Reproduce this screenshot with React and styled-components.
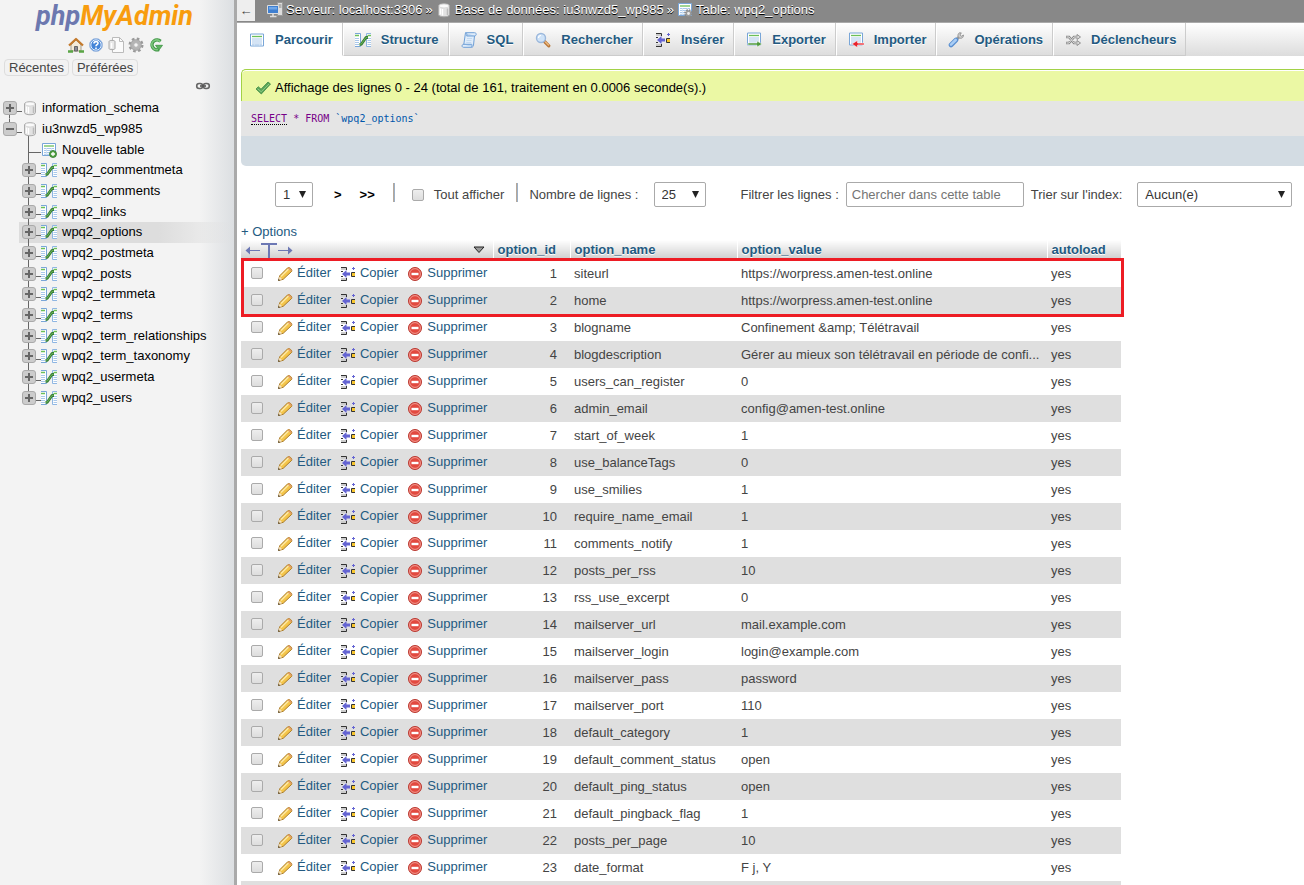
import React, { useState } from "react";
import styled, { createGlobalStyle } from "styled-components";

const GlobalStyle = createGlobalStyle`
  * {
    box-sizing: border-box;
  }
  body {
    margin: 0;
    background: #fff;
    color: #444;
    font-family: "Liberation Sans", Arial, sans-serif;
    font-size: 13px;
    line-height: 16px;
  }
  button, input, select {
    font: inherit;
    color: inherit;
  }
  a {
    color: #235a81;
    text-decoration: none;
  }
`;

const Page = styled.div`
  display: flex;
  height: 100vh;
  overflow: hidden;
`;

/* ---------- sidebar ---------- */

const Sidebar = styled.nav`
  flex: none;
  width: 237px;
  border-right: 3px solid #aaa;
  background: linear-gradient(to right, #f3f3f3 200px, #dcdfe2);
`;

const Logo = styled.a`
  display: block;
  padding-right: 5px;
  text-align: center;
  font-family: Roboto, sans-serif;
  font-size: 27px;
  font-weight: 700;
  font-style: italic;
  line-height: 32px;
  color: #f89c0e;
  span {
    color: #6c78af;
  }
`;

const QuickLinks = styled.div`
  display: flex;
  justify-content: center;
  gap: 4px;
  padding: 5px 2px 6px 0;
  a {
    height: 16px;
  }
`;

const RecentRow = styled.div`
  display: flex;
  gap: 3px;
  padding-left: 4px;
`;

const RecentButton = styled.button`
  height: 17px;
  padding: 0 4px;
  border: 1px solid #ddd;
  border-radius: 4px;
  background: #f2f2f2;
  line-height: 15px;
  cursor: pointer;
`;

const LinkToggle = styled.button`
  display: block;
  margin: 2px 23px 4px auto;
  padding: 0;
  border: 0;
  background: none;
  height: 16px;
  cursor: pointer;
`;

const Tree = styled.ul`
  display: grid;
  grid-auto-rows: 1fr;
  height: 310px;
  margin: 0;
  padding: 0;
  list-style: none;
`;

const TreeRow = styled.li`
  display: flex;
  align-items: center;
  margin-left: ${(p) => (p.$nested ? 19 : 0)}px;
  padding-left: 3px;
  background: ${(p) => (p.$current ? "linear-gradient(to right, #ddd 140px, #dcdcdc00)" : "none")};
  a {
    color: #000;
    margin-left: ${(p) => (p.$nested ? 5 : 4)}px;
  }
`;

// vertical rail + horizontal branch of the tree, painted behind the expander
const rails = {
  down: "6px 100% / 1px 50%",
  up: "6px 0 / 1px 50%",
  full: "6px 0 / 1px 100%",
};

const Rail = styled.span`
  display: flex;
  align-items: center;
  align-self: stretch;
  width: 19px;
  background:
    linear-gradient(#666, #666) ${(p) => rails[p.$rail]} no-repeat,
    linear-gradient(#666, #666) 6px 13px / 13px 1px no-repeat;
`;

const TreeIcon = styled.span`
  display: flex;
  align-items: center;
  align-self: stretch;
  background: ${(p) =>
    p.$open ? "linear-gradient(#666, #666) 6px 100% / 1px 4px no-repeat" : "none"};
`;

const Expander = styled.button`
  width: 14px;
  height: 14px;
  padding: 0;
  border: 1px solid #aaa;
  border-radius: 3px;
  background: #ccc;
  cursor: pointer;
  svg {
    display: block;
  }
`;

/* ---------- top of the main column ---------- */

const Main = styled.main`
  flex: 1;
  min-width: 0;
`;

const ServerBar = styled.header`
  display: flex;
  align-items: flex-start;
  height: 23px;
  background: #888;
  border-bottom: 1px solid #aaa;
`;

const Collapse = styled.button`
  width: 18px;
  height: 21px;
  padding: 0;
  border: 0;
  background: #eee;
  color: #444;
  line-height: 21px;
  cursor: pointer;
`;

const Crumbs = styled.div`
  display: flex;
  align-items: center;
  gap: 3px;
  height: 20px;
  margin-left: 12px;
  color: #fff;
  text-shadow: 0 1px 0 #000;
  white-space: nowrap;
  a {
    display: flex;
    align-items: center;
    gap: 3px;
    color: #fff;
  }
`;

const Tabs = styled.nav`
  display: flex;
  height: 33px;
  background: linear-gradient(#fff, #dcdcdc);
`;

const Tab = styled.a`
  display: flex;
  align-items: center;
  gap: 10px;
  padding: 2px 9px 0 11px;
  border: solid;
  border-width: 0 1px 1px;
  border-color: #fff #ccc ${(p) => (p.$active ? "#fff" : "#ccc")} #fff;
  background: ${(p) => (p.$active ? "#fff" : "none")};
  font-weight: bold;
  text-shadow: 0 1px 0 #fff;
  white-space: nowrap;
`;

/* ---------- query result ---------- */

const Content = styled.div`
  padding: 13px 0 0 4px;
`;

const Success = styled.div`
  display: flex;
  align-items: center;
  gap: 4px;
  height: 32px;
  padding: 4px 0 0 13px;
  border: solid #a2d246;
  border-width: 1px 0 0 1px;
  border-radius: 5px 0 0 0;
  background: #ebf8a4;
  box-shadow: inset 0 1px 0 #fff;
  color: #000;
`;

const Query = styled.code`
  display: block;
  height: 35px;
  padding: 11px 0 0 10px;
  background: #e5e5e5;
  font-family: "DejaVu Sans Mono", monospace;
  font-size: 10px;
  line-height: 14px;
  color: #708;
  a {
    color: #708;
    border-bottom: 1px dotted #000;
  }
  span {
    color: #05a;
  }
`;

const Tools = styled.div`
  height: 30px;
  border-radius: 0 0 0 5px;
  background: #d3dce3;
`;

const Pager = styled.form`
  display: flex;
  align-items: center;
  height: 25px;
  margin: 16px 0 17px;
  padding-left: 34px;
  white-space: nowrap;
`;

const PageButtons = styled.div`
  display: flex;
  gap: 18px;
  margin: 0 18px 0 21px;
`;

const PageButton = styled.button`
  padding: 0;
  border: 0;
  background: none;
  color: #000;
  font-weight: bold;
  cursor: pointer;
`;

const Divider = styled.span`
  flex: none;
  align-self: flex-start;
  width: 2px;
  height: 19px;
  margin-top: 1px;
  border-left: 1px solid #b8a898;
  background: #9bb0c8;
`;

const Field = styled.label`
  display: flex;
  align-items: center;
  gap: ${(p) => p.$gap}px;
  margin-left: ${(p) => p.$before}px;
`;

const arrow =
  "data:image/svg+xml,%3Csvg xmlns='http://www.w3.org/2000/svg' width='7' height='7'%3E%3Cpath d='M0 0h7L3.5 7z' fill='%23222'/%3E%3C/svg%3E";

const Select = styled.select`
  appearance: none;
  width: ${(p) => p.$width}px;
  height: 25px;
  padding: 0 7px;
  border: 1px solid #aaa;
  border-radius: 2px;
  background: #fff url("${arrow}") right 6px top 8px no-repeat;
  color: #333;
`;

const FilterInput = styled.input`
  width: 178px;
  height: 25px;
  padding: 0 5px;
  border: 1px solid #aaa;
  border-radius: 2px;
  &::placeholder {
    color: #757575;
  }
`;

const Checkbox = styled.input.attrs({ type: "checkbox" })`
  appearance: none;
  flex: none;
  width: 12px;
  height: 12px;
  margin: 0;
  border: 1px solid #aaa;
  border-radius: 2px;
  background: linear-gradient(#eee, #ddd);
  &:checked {
    background: #777;
  }
`;

const OptionsLink = styled.a`
  display: block;
`;

/* ---------- data table ---------- */

const TableWrap = styled.div`
  position: relative;
  width: 880px;
`;

const Table = styled.table`
  width: 100%;
  table-layout: fixed;
  border-collapse: collapse;
`;

const Th = styled.th`
  width: ${(p) => p.$width}px;
  height: 20px;
  padding: 0 4px;
  border-left: ${(p) => (p.$first ? 0 : 1)}px solid #fff;
  background: linear-gradient(#fff, #ccc);
  text-align: left;
  text-shadow: 0 1px 0 #fff;
  color: #235a81;
`;

const HeadTools = styled.div`
  display: flex;
  justify-content: space-between;
  align-items: center;
  padding-right: 4px;
`;

const Tr = styled.tr`
  height: 27px;
  background: ${(p) => (p.$odd ? "#fff" : "#dfdfdf")};
`;

const Td = styled.td`
  padding: ${(p) => (p.$right ? "1px 13px 0 0" : "1px 4px 0")};
  text-align: ${(p) => (p.$right ? "right" : "left")};
  white-space: nowrap;
`;

const ActionCell = styled.td`
  padding: 0 0 2px 10px;
`;

const Actions = styled.div`
  display: flex;
  align-items: center;
  gap: 9px;
`;

const Action = styled.a`
  display: flex;
  align-items: center;
  gap: 4px;
  svg {
    margin-top: 2px;
  }
`;

const RowCheck = styled(Checkbox)`
  margin-right: 5px;
`;

// frame drawn over the two rows that hold the site address
const Highlight = styled.div`
  position: absolute;
  top: 18px;
  left: 0;
  right: -3px;
  height: 59px;
  border: 3px solid #ed1c24;
  pointer-events: none;
`;

/* ---------- icons ---------- */

const Svg = ({ children }) => (
  <svg width="16" height="16" viewBox="0 0 16 16" fill="none" aria-hidden="true" style={{ flex: "none" }}>
    {children}
  </svg>
);

const HomeIcon = () => (
  <Svg>
    <path d="M3 8l5-5 5 5v6H3z" fill="#f3ead8" stroke="#a9a08c" />
    <path d="M1 8.500L8 2l7 6.500" stroke="#c47a2c" strokeWidth="2.200" strokeLinejoin="round" />
    <path d="M6.500 14V9.500h3V14z" fill="#8a8a96" stroke="#666" />
    <path d="M0 14.500h5M11 14.500h5" stroke="#5aa545" strokeWidth="2.500" />
  </Svg>
);

const HelpIcon = () => (
  <Svg>
    <circle cx="8" cy="8" r="6.500" fill="#4384d8" stroke="#a8bfe0" />
    <circle cx="8" cy="8" r="5.200" stroke="#e8f1fc" />
    <path d="M6 6.500c0-2.500 4-2.500 4-.3 0 1.500-2 1.500-2 3M8 10.500V12" stroke="#fff" strokeWidth="1.600" />
  </Svg>
);

const DocIcon = () => (
  <Svg>
    <path d="M4.500.5h7l4 4v11h-11z" fill="#fbfbfb" stroke="#bbb" />
    <path d="M11.500.5v4h4" stroke="#bbb" />
    <path d="M1 4.500c0-1.500 6-1.500 6 0v7c0 1.500-6 1.500-6 0z" fill="#e8e8e8" stroke="#aaa" />
    <path d="M3.500 6v5" stroke="#fff" strokeWidth="1.500" />
  </Svg>
);

const GearIcon = () => (
  <Svg>
    <circle cx="8" cy="8" r="6.300" stroke="#999" strokeWidth="2.400" strokeDasharray="2.600 2.350" />
    <circle cx="8" cy="8" r="4" stroke="#b4b4b4" strokeWidth="3" />
    <circle cx="8" cy="8" r="5.400" stroke="#999" strokeWidth=".6" />
    <circle cx="8" cy="8" r="2.300" fill="#f3f3f3" stroke="#999" strokeWidth=".7" />
  </Svg>
);

const ReloadIcon = () => (
  <Svg>
    <path d="M12.500 4.300A5 5 0 1 0 11 12.500" stroke="#3d9443" strokeWidth="3.400" />
    <path d="M12.300 4.700A4.800 4.800 0 1 0 10.500 12.300" stroke="#7cc67c" strokeWidth="1.600" />
    <path d="M7.500 8.300h7L11 13z" fill="#5db360" stroke="#3d9443" strokeWidth=".8" />
  </Svg>
);

const ChainIcon = () => (
  <Svg>
    <rect x="1.700" y="5.500" width="6" height="5" rx="2.500" stroke="#666" strokeWidth="1.600" />
    <rect x="8.300" y="5.500" width="6" height="5" rx="2.500" stroke="#666" strokeWidth="1.600" />
    <path d="M5 8h6" stroke="#555" strokeWidth="1.600" />
  </Svg>
);

const DbIcon = () => (
  <Svg>
    <path d="M2.500 4c0-3 11-3 11 0v8.500c0 3-11 3-11 0z" fill="#e2e2e2" stroke="#aaa" />
    <path d="M4.500 6.500v6M6.500 7v6.500" stroke="#fff" strokeWidth="1.300" />
    <path d="M11.500 6.500V13" stroke="#bbb" strokeWidth="1.500" />
    <ellipse cx="8" cy="4" rx="4.800" ry="1.900" fill="#fafafa" stroke="#ccc" strokeWidth=".6" />
  </Svg>
);

const Sheet = ({ y = 0 }) => (
  <>
    <path d={`M1.500 ${1.5 + y}h13v12h-13z`} fill="#fff" stroke="#79a6d8" />
    <path d={`M3 ${4 + y}h10`} stroke="#6bbf59" strokeWidth="1.300" />
    <path d={`M3 ${6.5 + y}h10M3 ${8.5 + y}h10M3 ${10.5 + y}h10M3 ${12.3 + y}h10`} stroke="#a9c8ea" />
    <path d={`M5.500 ${6 + y}v7M10.500 ${6 + y}v7`} stroke="#d4e4f5" strokeWidth=".8" />
  </>
);

const BrowseIcon = () => (
  <Svg>
    <Sheet y={0.5} />
  </Svg>
);

const NewTableIcon = () => (
  <Svg>
    <Sheet />
    <circle cx="12" cy="12" r="3.500" fill="#55a245" stroke="#2f7a2b" strokeWidth=".8" />
    <path d="M12 10v4M10 12h4" stroke="#fff" strokeWidth="1.300" />
  </Svg>
);

const TableGearIcon = () => (
  <Svg>
    <Sheet />
    <circle cx="11.500" cy="11.500" r="3.400" stroke="#888" strokeWidth="1.800" strokeDasharray="1.600 1.070" />
    <circle cx="11.500" cy="11.500" r="2.200" fill="#eee" stroke="#999" strokeWidth="1.500" />
  </Svg>
);

const StructureIcon = () => (
  <Svg>
    <path d="M0 1.500h5.500v13H0" fill="#fff" stroke="#79a6d8" />
    <path d="M16 1.500h-4.500v13H16" fill="#fff" stroke="#8fb6e2" />
    <path d="M0 3.500h4M12.500 3.500H16" stroke="#6bbf59" strokeWidth="1.300" />
    <path d="M0 6.500h4M0 8.500h4M0 10.500h4M0 12.500h4M12.500 6.500H16M12.500 8.500H16M12.500 10.500H16M12.500 12.500H16" stroke="#a9c8ea" />
    <path d="M4.500 12.300h1.800L11 5.500h2" stroke="#377f34" strokeWidth="2.800" strokeLinejoin="round" />
    <path d="M5 12h1.300L11 5.500h1.500" stroke="#6db35c" strokeWidth="1" />
  </Svg>
);

const SqlIcon = () => (
  <Svg>
    <path d="M4.500.7h9c2.500 0 2 3.300 0 3.300l-1 9c0 1-.6 2.300-2 2.300h-8c-2 0-2-3 .3-3z" fill="#e0edfa" stroke="#6f9fd6" />
    <path d="M2.500 12.300h8c1 0 .7 2.700-.5 2.700M5 .7c1 1 1 2 .7 3.300h8" stroke="#6f9fd6" fill="#bdd7f2" />
    <path d="M6 6.500h5M5.500 8.500h5M5.200 10.500h5" stroke="#c3d9f0" />
  </Svg>
);

const SearchIcon = () => (
  <Svg>
    <path d="M9.500 9.500l4.300 4.300" stroke="#b9773a" strokeWidth="3.200" strokeLinecap="round" />
    <path d="M10.500 10l3 3" stroke="#eebb80" strokeWidth="1.200" strokeLinecap="round" />
    <circle cx="6" cy="6" r="4.500" fill="#cfe3f8" stroke="#9bb8dc" strokeWidth="1.400" />
    <path d="M3.500 6c0-1.500 1-2.500 2.500-2.500" stroke="#fff" strokeWidth="1.200" />
  </Svg>
);

const InsertIcon = () => (
  <Svg>
    <path d="M1 2h5v2H1zM1 12h5v2H1z" fill="#ccc" />
    <path d="M1 1.500h5.500V4M1 5.500h2M1 10.500h2M6.500 12v2.500H1" stroke="#333" />
    <path d="M2 8l4.500-4v2.500H10v3H6.500V12z" fill="#6464d2" />
    <path d="M12 6.500h3v4h-3z" fill="#f7c62e" />
    <path d="M15 6.500h-3.500v4H15" stroke="#333" />
    <path d="M13.500 1v3M12 2.500h3" stroke="#6464d2" />
  </Svg>
);

const ExportIcon = () => (
  <Svg>
    <Sheet y={-0.500} />
    <path d="M2 11h9V9l5 3-5 3v-2H2z" fill="#4f9a3e" stroke="#fff" strokeWidth=".5" />
  </Svg>
);

const ImportIcon = () => (
  <Svg>
    <Sheet y={-0.500} />
    <path d="M16 11H9.500V8.500L4 12l5.500 3.500V13H16z" fill="#e8222b" stroke="#fff" strokeWidth=".5" />
    <path d="M10 12h5" stroke="#ff9a9a" strokeWidth=".8" />
  </Svg>
);

const WrenchIcon = () => (
  <Svg>
    <path d="M8.500 7.500l3-3" stroke="#999" strokeWidth="2.600" />
    <path d="M11.500.8c-2 1-2.200 4.200 0 5.200s4-.5 4-3l-2 1.200-1.500-1.300 1.300-2z" fill="#ccc" stroke="#888" strokeWidth=".8" />
    <path d="M3 13l5-5" stroke="#5a8fd0" strokeWidth="4.600" strokeLinecap="round" />
    <path d="M3 12.700l4.700-4.700" stroke="#a9cdf5" strokeWidth="2.600" strokeLinecap="round" />
  </Svg>
);

const TriggerIcon = () => (
  <Svg>
    <path d="M1 5h3l5 6h4M1 11h3l5-6h4" stroke="#888" strokeWidth="2.600" />
    <path d="M12 2.500L15.500 5 12 7.500zM12 8.500l3.500 2.500-3.500 2.500z" fill="#ddd" stroke="#888" strokeWidth=".9" />
    <path d="M1.500 5H4l5 6h4M1.500 11H4l5-6h4" stroke="#ddd" />
  </Svg>
);

const TickIcon = () => (
  <Svg>
    <path d="M1 9l2.300-2.300 2.700 2.500L13 2l2.500 2L6.300 14z" fill="#5aa657" stroke="#3f8a45" strokeWidth=".8" />
    <path d="M2.500 8.700l3.700 3L14 4" stroke="#8fcb86" />
  </Svg>
);

const PencilIcon = () => (
  <Svg>
    <path d="M1.500 14.500l1.200-4.700 8-8c1.500-1 4.800 1.500 4 3.500l-8.500 8z" fill="#f4c54a" stroke="#a87824" strokeLinejoin="round" />
    <path d="M4 10.500l7.500-7.500" stroke="#fde9a5" strokeWidth="1.500" />
    <path d="M2.500 10.500l2.700 2.700-3.500 1.100z" fill="#f5e3c4" />
    <path d="M1.200 14.800l.4-1.800 1.500 1.300z" fill="#333" />
    <path d="M11.300 1.800l3 3" stroke="#e39a6b" strokeWidth="1.500" />
  </Svg>
);

const DeleteIcon = () => (
  <Svg>
    <circle cx="8" cy="8" r="6.500" fill="#e2493f" stroke="#b93a32" />
    <circle cx="8" cy="8" r="5.400" stroke="#f19a90" />
    <path d="M4.500 8h7" stroke="#fff" strokeWidth="2.400" />
  </Svg>
);

const ServerIcon = () => (
  <Svg>
    <path d="M10.500.5h5v13h-5z" fill="#ddd" stroke="#999" />
    <path d="M11.500 3h3M11.500 5h3" stroke="#888" />
    <path d="M.5 3.500h11v8H.5z" fill="#3f7fd0" stroke="#ddd" />
    <path d="M2 5h8v2.500H2z" fill="#6ea6e8" />
    <path d="M6 12v2M3 14.500h6.500" stroke="#ddd" strokeWidth="1.600" />
  </Svg>
);

const SwapIcon = () => (
  <svg width="48" height="16" viewBox="0 0 48 16" fill="none" stroke="#6c78b4" aria-hidden="true">
    <path d="M3 8.500h12M33 8.500h12" />
    <path d="M5 4.500L.5 8.500l4.500 4zM43 4.500l4.500 4-4.500 4z" fill="#6c78b4" stroke="none" />
    <path d="M16 2h16M24 2v14" strokeWidth="2" />
  </svg>
);

const SortIcon = () => (
  <svg width="12" height="8" viewBox="0 0 12 8" aria-hidden="true">
    <path d="M1 1h10L6 6.500z" fill="#999" stroke="#222" />
  </svg>
);

const Sign = ({ minus }) => (
  <svg width="12" height="12" viewBox="0 0 12 12" aria-hidden="true">
    <path d={minus ? "M2 6h8" : "M2 6h8M6 2v8"} stroke="#666" strokeWidth="2" />
  </svg>
);

/* ---------- data ---------- */

const tables = [
  "wpq2_commentmeta",
  "wpq2_comments",
  "wpq2_links",
  "wpq2_options",
  "wpq2_postmeta",
  "wpq2_posts",
  "wpq2_termmeta",
  "wpq2_terms",
  "wpq2_term_relationships",
  "wpq2_term_taxonomy",
  "wpq2_usermeta",
  "wpq2_users",
];

const tabs = [
  ["Parcourir", BrowseIcon],
  ["Structure", StructureIcon],
  ["SQL", SqlIcon],
  ["Rechercher", SearchIcon],
  ["Insérer", InsertIcon],
  ["Exporter", ExportIcon],
  ["Importer", ImportIcon],
  ["Opérations", WrenchIcon],
  ["Déclencheurs", TriggerIcon],
];

const rows = [
  ["siteurl", "https://worpress.amen-test.online"],
  ["home", "https://worpress.amen-test.online"],
  ["blogname", "Confinement &amp; Télétravail"],
  ["blogdescription", "Gérer au mieux son télétravail en période de confi..."],
  ["users_can_register", "0"],
  ["admin_email", "config@amen-test.online"],
  ["start_of_week", "1"],
  ["use_balanceTags", "0"],
  ["use_smilies", "1"],
  ["require_name_email", "1"],
  ["comments_notify", "1"],
  ["posts_per_rss", "10"],
  ["rss_use_excerpt", "0"],
  ["mailserver_url", "mail.example.com"],
  ["mailserver_login", "login@example.com"],
  ["mailserver_pass", "password"],
  ["mailserver_port", "110"],
  ["default_category", "1"],
  ["default_comment_status", "open"],
  ["default_ping_status", "open"],
  ["default_pingback_flag", "1"],
  ["posts_per_page", "10"],
  ["date_format", "F j, Y"],
];

const Navigation = () => (
  <Sidebar>
    <Logo href="#">
      <span>php</span>MyAdmin
    </Logo>
    <QuickLinks>
      <a href="#" aria-label="Accueil"><HomeIcon /></a>
      <a href="#" aria-label="Aide"><HelpIcon /></a>
      <a href="#" aria-label="Documentation"><DocIcon /></a>
      <a href="#" aria-label="Paramètres"><GearIcon /></a>
      <a href="#" aria-label="Actualiser"><ReloadIcon /></a>
    </QuickLinks>
    <RecentRow>
      <RecentButton>Récentes</RecentButton>
      <RecentButton>Préférées</RecentButton>
    </RecentRow>
    <LinkToggle aria-label="Lier au panneau principal"><ChainIcon /></LinkToggle>
    <Tree>
      <TreeRow>
        <Rail $rail="down"><Expander aria-label="Ouvrir"><Sign /></Expander></Rail>
        <TreeIcon><DbIcon /></TreeIcon>
        <a href="#">information_schema</a>
      </TreeRow>
      <TreeRow>
        <Rail $rail="up"><Expander aria-label="Fermer"><Sign minus /></Expander></Rail>
        <TreeIcon $open><DbIcon /></TreeIcon>
        <a href="#">iu3nwzd5_wp985</a>
      </TreeRow>
      <TreeRow $nested>
        <Rail $rail="full" />
        <TreeIcon><NewTableIcon /></TreeIcon>
        <a href="#">Nouvelle table</a>
      </TreeRow>
      {tables.map((name, i) => (
        <TreeRow key={name} $nested $current={name === "wpq2_options"}>
          <Rail $rail={i === tables.length - 1 ? "up" : "full"}>
            <Expander aria-label="Ouvrir"><Sign /></Expander>
          </Rail>
          <TreeIcon><StructureIcon /></TreeIcon>
          <a href="#">{name}</a>
        </TreeRow>
      ))}
    </Tree>
  </Sidebar>
);

const Pagination = () => {
  const [filter, setFilter] = useState("");

  return (
    <Pager onSubmit={(e) => e.preventDefault()}>
      <Select $width={38} aria-label="Page">
        <option>1</option>
      </Select>
      <PageButtons>
        <PageButton>&gt;</PageButton>
        <PageButton>&gt;&gt;</PageButton>
      </PageButtons>
      <Divider />
      <Field $before={17} $gap={10}>
        <Checkbox />
        Tout afficher
      </Field>
      <Field as="span" $before={12} $gap={11}>
        <Divider />
        <Field $before={0} $gap={15}>
          Nombre de lignes :
          <Select $width={52}>
            <option>25</option>
          </Select>
        </Field>
      </Field>
      <Field $before={35} $gap={7}>
        Filtrer les lignes :
        <FilterInput
          placeholder="Chercher dans cette table"
          value={filter}
          onChange={(e) => setFilter(e.target.value)}
        />
      </Field>
      <Field $before={7} $gap={15}>
        Trier sur l'index:
        <Select $width={155}>
          <option>Aucun(e)</option>
        </Select>
      </Field>
    </Pager>
  );
};

const OptionsTable = () => (
  <TableWrap>
    <Table>
      <thead>
        <tr>
          <Th $width={252} $first>
            <HeadTools>
              <SwapIcon />
              <SortIcon />
            </HeadTools>
          </Th>
          <Th $width={77}>option_id</Th>
          <Th $width={167}>option_name</Th>
          <Th $width={310}>option_value</Th>
          <Th $width={74}>autoload</Th>
        </tr>
      </thead>
      <tbody>
        {rows.map(([name, value], i) => (
          <Tr key={name} $odd={i % 2 === 0}>
            <ActionCell>
              <Actions>
                <RowCheck aria-label={name} />
                <Action href="#"><PencilIcon />Éditer</Action>
                <Action href="#"><InsertIcon />Copier</Action>
                <Action href="#"><DeleteIcon />Supprimer</Action>
              </Actions>
            </ActionCell>
            <Td $right>{i + 1}</Td>
            <Td>{name}</Td>
            <Td>{value}</Td>
            <Td>yes</Td>
          </Tr>
        ))}
        <Tr>
          <td colSpan="5" />
        </Tr>
      </tbody>
    </Table>
    <Highlight />
  </TableWrap>
);

const App = () => (
  <Page>
    <GlobalStyle />
    <Navigation />
    <Main>
      <ServerBar>
        <Collapse>←</Collapse>
        <Crumbs>
          <a href="#"><ServerIcon />Serveur: localhost:3306</a>
          »
          <a href="#"><DbIcon />Base de données: iu3nwzd5_wp985</a>
          »
          <a href="#"><TableGearIcon />Table: wpq2_options</a>
        </Crumbs>
      </ServerBar>
      <Tabs>
        {tabs.map(([label, Icon], i) => (
          <Tab key={label} href="#" $active={i === 0}>
            <Icon />
            {label}
          </Tab>
        ))}
      </Tabs>
      <Content>
        <Success>
          <TickIcon />
          Affichage des lignes 0 - 24 (total de 161, traitement en 0.0006 seconde(s).)
        </Success>
        <Query>
          <a href="#">SELECT</a> * FROM <span>`wpq2_options`</span>
        </Query>
        <Tools />
        <Pagination />
        <OptionsLink href="#">+ Options</OptionsLink>
        <OptionsTable />
      </Content>
    </Main>
  </Page>
);

export default App;
